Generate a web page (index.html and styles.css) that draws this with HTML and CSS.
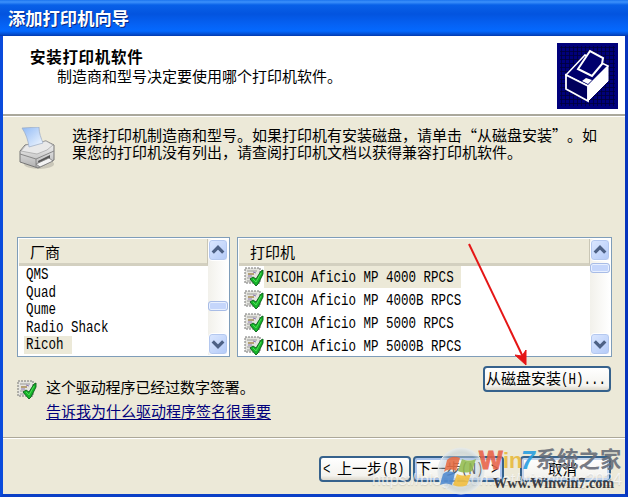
FILE: index.html
```html
<!DOCTYPE html>
<html lang="zh-CN">
<head>
<meta charset="UTF-8">
<meta name="viewport" content="width=device-width, initial-scale=1.0">
<title>添加打印机向导</title>
<link rel="stylesheet" href="styles.css">
</head>
<body>

<!-- 公用图标 -->
<svg class="defs" width="0" height="0">
  <symbol id="signed" viewBox="0 0 20 20">
    <path d="M1 1h15v15H1z" fill="#e4e4df" stroke="#777" stroke-dasharray="2 1"/>
    <path d="M3 4h10M3 11h4M3 14h5" stroke="#999" stroke-width="1.2"/>
    <path d="M4 7h6" stroke="#a48a52" stroke-width="1.5"/>
    <path d="M9 5l3 1M4 9h4" stroke="#8c78b4"/>
    <path d="M6 12l3-2 3 2 5-8 2-1v4l-5 10-2 2z" fill="#16b52a" stroke="#075c16" stroke-width=".9"/>
    <path d="M9 12l3 3 5-9" fill="none" stroke="#4fdc55"/>
  </symbol>
  <symbol id="up" viewBox="0 0 12 12"><path d="M1.5 8.2L6 3.700l4.500 4.500" fill="none" stroke="#4d6185" stroke-width="2.800"/></symbol>
  <symbol id="down" viewBox="0 0 12 12"><path d="M1.500 3.800L6 8.300l4.500-4.500" fill="none" stroke="#4d6185" stroke-width="2.800"/></symbol>
</svg>

<div class="window">
  <div class="title">添加打印机向导</div>

  <div class="header">
    <div class="header_text">
      <h1>安装打印机软件</h1>
      <p>制造商和型号决定要使用哪个打印机软件。</p>
    </div>
    <svg class="banner" viewBox="0 0 61 66">
      <defs>
        <pattern id="dots" width="4" height="4" patternUnits="userSpaceOnUse">
          <path d="M0 0h4M0 0v4" stroke="#000038" stroke-width="1.5"/>
        </pattern>
      </defs>
      <path d="M0 0h61v66H0z" fill="#00007b"/>
      <path d="M3 3h55v60H3z" fill="url(#dots)"/>
      <path d="M9 32L28 12l23 11-20 20z" fill="#00006c" stroke="#fff" stroke-width="1.500"/>
      <path d="M9 32l22 11v15L9 46z" fill="#00005c" stroke="#fff" stroke-width="1.800"/>
      <path d="M31 43l20-20v15L31 58z" fill="#fff" stroke="#fff"/>
      <path d="M21 26L33 8l13 7-1 6-10 12z" fill="#00006c" stroke="#fff" stroke-width="2"/>
      <path d="M25 38l4-3 6 2-4 4z" fill="#fff"/>
    </svg>
  </div>

  <div class="intro">
    <svg class="printer" viewBox="0 0 38 44">
      <defs>
        <linearGradient id="paper" x2="1" y2="1"><stop offset="0" stop-color="#8fb9f5"/><stop offset="1" stop-color="#f3f8ff"/></linearGradient>
        <linearGradient id="shell" x2="0" y2="1"><stop offset="0" stop-color="#f8f8f8"/><stop offset="1" stop-color="#b0b0b0"/></linearGradient>
      </defs>
      <ellipse cx="21" cy="37" rx="15" ry="5" fill="#a8a69a" opacity=".5"/>
      <path d="M2 24l5-6 21-4 8 4v15l-16 8L2 35z" fill="url(#shell)" stroke="#777" stroke-linejoin="round"/>
      <path d="M3 24l5-6 20-4 7 4-6 5-10 4z" fill="#e9e9e9" stroke="#a2a2a2" stroke-width=".7"/>
      <path d="M4 1l17-1c0 6 2 11 4 16l-14 4C10 13 8 7 4 1z" fill="url(#paper)" stroke="#9babc3" stroke-width=".7"/>
      <path d="M2 27l16 5 18-8M18 32v9" fill="none" stroke="#888"/>
      <path d="M20 34l12-6v5l-11 5z" fill="#555"/>
      <path d="M18 37l13-6 4 3-13 6z" fill="#f3f3f3" stroke="#777" stroke-width=".8"/>
    </svg>
    <p>选择打印机制造商和型号。如果打印机有安装磁盘，请单击“从磁盘安装”。如<br>果您的打印机没有列出，请查阅打印机文档以获得兼容打印机软件。</p>
  </div>

  <div class="lists">
    <div class="list maker">
      <div class="list_main">
        <div class="list_head">厂商</div>
        <ul>
          <li><span class="en">QMS</span></li>
          <li><span class="en">Quad</span></li>
          <li><span class="en">Qume</span></li>
          <li><span class="en">Radio Shack</span></li>
          <li class="on"><span class="en">Ricoh</span></li>
        </ul>
      </div>
      <div class="scroll">
        <span class="scroll_btn"><svg><use href="#up"/></svg></span>
        <span class="thumb"></span>
        <span class="scroll_btn"><svg><use href="#down"/></svg></span>
      </div>
    </div>
    <div class="list model">
      <div class="list_main">
        <div class="list_head">打印机</div>
        <ul>
          <li class="on"><svg class="signed"><use href="#signed"/></svg><span class="name"><span class="en">RICOH Aficio MP 4000 RPCS</span></span></li>
          <li><svg class="signed"><use href="#signed"/></svg><span class="name"><span class="en">RICOH Aficio MP 4000B RPCS</span></span></li>
          <li><svg class="signed"><use href="#signed"/></svg><span class="name"><span class="en">RICOH Aficio MP 5000 RPCS</span></span></li>
          <li><svg class="signed"><use href="#signed"/></svg><span class="name"><span class="en">RICOH Aficio MP 5000B RPCS</span></span></li>
        </ul>
      </div>
      <div class="scroll">
        <span class="scroll_btn"><svg><use href="#up"/></svg></span>
        <span class="thumb"></span>
        <span class="scroll_btn"><svg><use href="#down"/></svg></span>
      </div>
    </div>
  </div>

  <div class="sign">
    <svg class="signed"><use href="#signed"/></svg>
    <div class="sign_text">
      <p>这个驱动程序已经过数字签署。</p>
      <a href="#">告诉我为什么驱动程序签名很重要</a>
    </div>
    <button class="btn disk">从磁盘安装<span class="en">(H)...</span></button>
  </div>

  <div class="footer">
    <button class="btn back"><span class="en en_lt">&lt;</span>上一步<span class="en">(B)</span></button>
    <button class="btn next">下一步<span class="en">(N) &gt;</span></button>
    <button class="btn cancel">取消</button>
  </div>
</div>

<!-- 指示箭头 -->
<svg class="arrow" viewBox="0 0 70 130">
  <path d="M5 4l54 113" stroke="#e51616" stroke-width="2"/>
  <path d="M62 125l-11-10 7 1 4-6z" fill="#e51616" stroke="#e51616"/>
</svg>

<!-- 水印 -->
<div class="csdn">https://blog.csdn.net/winxitong2024</div>
<div class="mark">
  <svg class="orb" viewBox="0 0 50 50">
    <defs>
      <radialGradient id="ball"><stop offset="0" stop-color="#fff" stop-opacity=".3"/><stop offset=".8" stop-color="#b9cad8" stop-opacity=".5"/><stop offset="1" stop-color="#e6edf1" stop-opacity=".75"/></radialGradient>
    </defs>
    <circle cx="25" cy="25" r="23" fill="url(#ball)" stroke="#e6e9e7"/>
    <g opacity=".85">
      <path d="M11 14c4-4 8-4 13-2l-4 13c-4-2-8-2-12 1z" fill="#e7683d"/>
      <path d="M26 13c5 2 9 2 14 0l-4 12c-4 2-9 2-14 0z" fill="#91bb4c"/>
      <path d="M7 28c4-3 8-3 12-1l-3 12c-4-2-8-2-12 0z" fill="#4b87cf"/>
      <path d="M21 28c5 2 9 2 14 0l-4 11c-4 2-9 2-14 0z" fill="#f4bd36"/>
    </g>
  </svg>
  <div class="mark_text">
    <div class="brand"><b class="w">W</b><b class="in">in</b><b class="seven">7</b><b class="home">系统之家</b></div>
    <div class="site">Www.Winwin7.com</div>
  </div>
</div>

</body>
</html>
```
FILE: styles.css
```css
* {margin:0; padding:0; box-sizing: border-box;}
body {width: 629px; height: 497px; overflow: hidden; position: relative; background: #fff; font: 15px/17px "Noto Sans CJK SC", sans-serif; color: #000; text-spacing-trim: space-all;}
li {list-style: none;}
svg {display: block; flex: none;}
.defs {position: absolute;}

/* 宋体风格的半角字符 */
.en {display: inline-block; font-family: "Liberation Mono", monospace; font-size: 16.5px; white-space: pre; transform: scaleX(.758); transform-origin: 0 50%;}

.window {width: 628px; height: 497px; display: flex; flex-direction: column; background: #ece9d8; border: solid #0a4bdc; border-width: 0 3px 3px; border-right-color: #0734bd; border-bottom-color: #0a3fc6;}
.title {height: 36px; margin: 0 -3px; padding-left: 8px; background: linear-gradient(#1c74ee 0, #3c91fb 2px, #0861e8 5px, #0354df 14px, #0561f3 24px, #0469ff 31px, #0450d4 34px, #0339ae 36px); color: #fff; font-weight: bold; font-size: 17.3px; line-height: 35px; text-shadow: 1px 1px #0a2a83; flex: none;}

.header {height: 80px; flex: none; display: flex; justify-content: space-between; padding: 7px 7px 0 27px; background: #fff; border-bottom: 2px solid #aaa89c;}
.header_text {padding-top: 4px;}
.header h1 {font-size: 15.5px; line-height: 19px; letter-spacing: .7px;}
.header p {padding-left: 27px; line-height: 20px;}
.banner {width: 61px; height: 66px;}

.intro {height: 121px; flex: none; display: flex; padding: 10px 0 0 15px; border-top: 1px solid #fff;}
.intro p {margin: -1px 0 0 16px; white-space: nowrap;}
.printer {width: 38px; height: 44px;}

.lists {display: flex; gap: 7px; padding-left: 14px; height: 120px; flex: none;}
.list {display: flex; height: 120px; background: #fff; border: 1px solid #7f9db9; padding: 1px;}
.maker {width: 213px;}
.model {width: 375px;}
.list_main {flex: 1;}
.list_head {height: 27px; padding-left: 11px; line-height: 26px; background: #ece9d8; border-right: 1px solid #c9c6b5; border-bottom: 3px solid #d3d0c0;}
.maker li {width: max-content; height: 17.6px; margin-left: 5px; padding-left: 2px; line-height: 17.6px;}
.maker .on {width: 48px; background: #ece9d8;}
.maker li .en {display: block;}
.model li {display: flex; align-items: center; height: 22.8px; padding-left: 5px;}
.model .signed {width: 20px; height: 20px;}
.model .name {height: 22px; padding-left: 2px; line-height: 24px; width: 197px;}
.model .name .en {display: block;}
.model .on .name {background: #ece9d8;}

.scroll {width: 20px; display: flex; flex-direction: column; justify-content: space-between; background: linear-gradient(90deg, #f2f1eb, #fff);}
.scroll_btn {display: flex; align-items: center; justify-content: center; height: 22px; border: 1px solid #fff; border-radius: 4px; background: linear-gradient(135deg, #dce8ff, #b3caf8); box-shadow: inset 0 0 0 1px #b4c8ef;}
.scroll_btn svg {width: 14px; height: 14px;}
.thumb {height: 10px; border: 1px solid #a8bce6; border-radius: 3px; background: #c5d6fb; box-shadow: inset 0 0 0 1px #e8f0ff;}
.maker .thumb {margin-top: 32px; margin-bottom: 14px;}
.model .thumb {margin-bottom: 58px;}

.sign {height: 81px; flex: none; display: flex; padding: 9px 14px 0 14px; border-bottom: 1px solid #aca899; box-shadow: 0 1px #fff;}
.sign .signed {width: 20px; height: 20px; margin-top: 14px;}
.sign_text {padding: 12px 0 0 9px; flex: 1;}
.sign_text p {line-height: 18px; letter-spacing: -.1px;}
.sign_text a {display: block; width: max-content; margin-top: 6px; line-height: 18px; color: #00007b; text-underline-offset: 2px;}

.btn {height: 26px; padding: 0 4px; border: 2px solid #36628c; border-radius: 4px; background: linear-gradient(#fff, #f4f3ee 80%, #dcd8cc); font: 15px/20px "Noto Sans CJK SC", sans-serif; color: #000; text-align: left; white-space: nowrap; overflow: hidden;}
.disk {width: 128px; padding-left: 1px;}
.footer {display: flex; padding: 18px 0 0 316px;}
.back {width: 92px; padding-left: 2px;}
.next {width: 91px; margin-left: 2px; padding-left: 1px; box-shadow: inset 0 0 0 2px #a9c4ee;}
.cancel {width: 91px; margin-left: 16px; padding-left: 26px; font-size: 14.5px; box-shadow: inset 0 0 0 2px #c5d5ec;}
.en_lt {width: 14px;}

.arrow {position: absolute; left: 464px; top: 240px; width: 70px; height: 130px;}
.csdn {position: absolute; left: 372px; top: 470px; width: 250px; font: 16px/20px "Liberation Sans", sans-serif; color: rgba(255,255,255,.7); text-shadow: 0 1px 1px rgba(120,120,120,.25); white-space: nowrap;}
.mark {position: absolute; left: 436px; top: 446px; display: flex;}
.orb {width: 50px; height: 50px;}
.mark_text {margin-left: -7px; white-space: nowrap;}
.brand {display: flex; height: 29px; line-height: 29px; font-family: "Liberation Sans", "Noto Sans CJK SC", sans-serif; font-size: 25px; opacity: .9;}
.w {color: #e8644a; width: 24px; -webkit-text-stroke: 1px #e8644a;}
.in {color: #e8ba3d; width: 18px; font-size: 22px;}
.seven {color: #299ee0; width: 15px; font-style: italic;}
.home {color: #686d78; font-size: 21.3px;}
.site {padding-left: 14px; font: bold 14.2px/17px "Liberation Serif", serif; color: #3c3c40;}
```
